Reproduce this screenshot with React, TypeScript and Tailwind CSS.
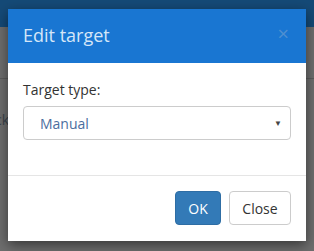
import React from "react";

export default function App() {
  return (
    <div
      className="relative w-[314px] h-[251px] overflow-hidden bg-[#6e6e6e]"
      style={{ fontFamily: '"Open Sans", "Noto Sans", sans-serif' }}
    >
      {/* background page (dimmed) */}
      <div className="h-[27px] bg-[#154a77]" />
      <div className="h-[52px] border-b border-[#5c5c5c]" />
      <div className="mt-[31px] w-[9px] overflow-hidden flex justify-end">
        <span className="whitespace-nowrap text-[14px] leading-[20px] text-[#3a434c]">Back</span>
      </div>

      {/* modal */}
      <div className="absolute left-[8px] top-[9px] w-[298px] h-[232px] bg-white shadow-[0_4px_12px_rgba(0,0,0,0.5)] flex flex-col">
        <div className="h-[54px] bg-[#1976d2] flex items-center justify-between pl-[15px] pr-[17px]">
          <span className="text-[18px] text-[#d4e6f8] leading-none -mt-[2px]">Edit target</span>
          <span className="text-[20px] leading-none text-[#4f8fd0] -mt-[4px]">×</span>
        </div>
        <div className="px-[15px] pt-[17px] h-[113px] border-b border-[#e5e5e5]">
          <div className="text-[14px] text-[#333] leading-[20px]">Target type:</div>
          <div className="mt-[6px] h-[34px] border border-[#cccccc] rounded-[4px] flex items-center justify-between pl-[16px] pr-[8px]">
            <span className="text-[14px] text-[#4b6e9e]">Manual</span>
            <span className="text-[8px] text-[#444]">▼</span>
          </div>
        </div>
        <div className="flex justify-end gap-[8px] pt-[15px] pr-[15px]">
          <button className="w-[46px] h-[34px] rounded-[4px] bg-[#337ab7] border border-[#2e6da4] text-white text-[14px]">
            OK
          </button>
          <button className="w-[62px] h-[34px] rounded-[4px] bg-white border border-[#cccccc] text-[#333] text-[14px]">
            Close
          </button>
        </div>
      </div>
    </div>
  );
}
